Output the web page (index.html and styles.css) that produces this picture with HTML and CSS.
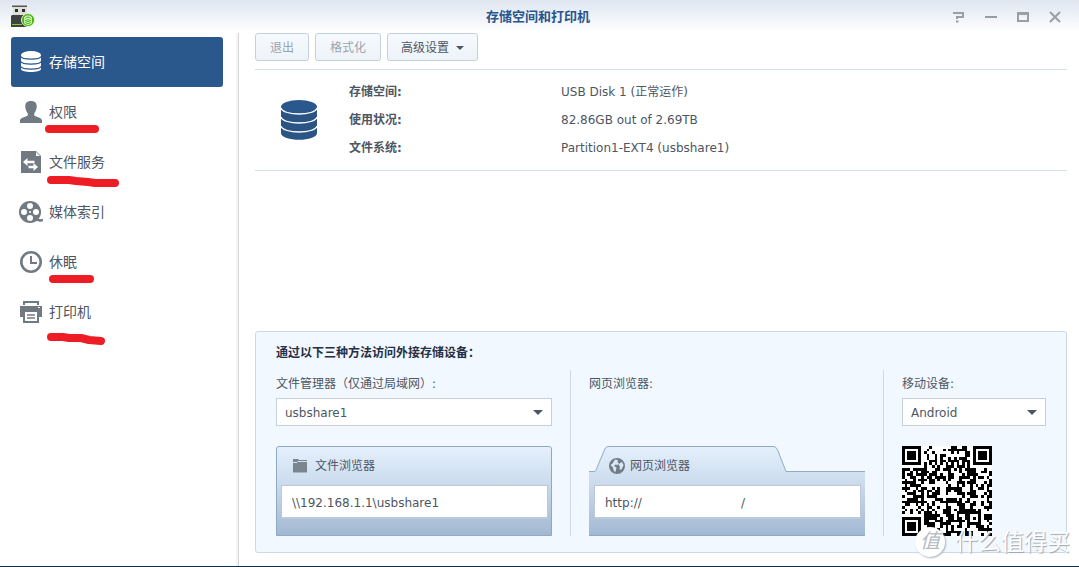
FILE: index.html
```html
<!DOCTYPE html>
<html lang="zh-CN">
<head>
<meta charset="utf-8">
<title>存储空间和打印机</title>
<link rel="stylesheet" href="styles.css">
</head>
<body>
<div class="window">
  <header class="titlebar">
    <svg class="app-icon" width="24" height="24" viewBox="0 0 24 24" aria-hidden="true">
      <rect x="2" y="1" width="14" height="10" rx="1" fill="#deded9"/>
      <path d="M1 0.5h15v1.5H1z" fill="#555"/>
      <path d="M4 4h3v3H4zM11 4h3v3h-3z" fill="#2b2b2b"/>
      <path d="M0 11l1-1h15v12H0z" fill="#3f4142"/>
      <path d="M1 19h10v1H1z" fill="#79cf25"/>
      <circle cx="17" cy="15" r="6.5" fill="#43b50b" stroke="#e3f1d8" stroke-width="1"/>
      <ellipse cx="17" cy="12.2" rx="3.3" ry="1.2" fill="none" stroke="#fff"/>
      <path d="M13.7 14.3q3.3 2 6.6 0M13.7 16.5q3.3 2 6.6 0M13.7 18.5q3.3 2 6.6 0M13.7 12v6.5M20.3 12v6.5" fill="none" stroke="#d8f5c4"/>
    </svg>
    <h1>存储空间和打印机</h1>
    <div class="window-controls">
      <button aria-label="帮助"><svg width="14" height="12" viewBox="0 0 14 12"><path d="M1 2h10v4H5v2M4 10.5h2.5" fill="none" stroke="#989fa7" stroke-width="2"/></svg></button>
      <button aria-label="最小化"><svg width="14" height="12" viewBox="0 0 14 12"><path d="M1 6h12" stroke="#969da6" stroke-width="2"/></svg></button>
      <button aria-label="最大化"><svg width="14" height="12" viewBox="0 0 14 12"><path d="M1 1h12v10H1zM3 4v5h8V4z" fill="#989fa7" fill-rule="evenodd"/></svg></button>
      <button aria-label="关闭"><svg width="14" height="12" viewBox="0 0 14 12"><path d="M2 1l10 10M12 1L2 11" stroke="#989fa7" stroke-width="2"/></svg></button>
    </div>
  </header>
  <div class="body">
    <nav class="sidebar">
      <a class="nav-item active" href="#">
        <svg width="24" height="24" viewBox="0 0 24 24"><path d="M2 5v14c0 4 20 4 20 0V5z" fill="#fff"/><ellipse cx="12" cy="5" rx="10" ry="4" fill="#fff"/><path d="M2 6.5c1 3.5 19 3.5 20 0M2 11.5c1 3.5 19 3.5 20 0M2 16.5c1 3.5 19 3.5 20 0" fill="none" stroke="#2a588c" stroke-width="1.2"/></svg>
        <span>存储空间</span>
      </a>
      <a class="nav-item" href="#">
        <svg width="24" height="24" viewBox="0 0 24 24"><path d="M12 1c4 0 6 2 5.700 6-.2 3-1.500 5-2.500 6.500v2c2 1.500 7.800 2 7.800 5V23H1v-2.500c0-3 5.800-3.500 7.800-5v-2C7.800 12 6.500 10 6.300 7 6 3 8 1 12 1z" fill="#717982"/></svg>
        <span>权限</span>
        <svg class="mark" width="80" height="24" viewBox="0 0 80 24"><path d="M4 8H50" /></svg>
      </a>
      <a class="nav-item" href="#">
        <svg width="24" height="24" viewBox="0 0 24 24"><path d="M2 1h15l5 5v17H2z" fill="#717982"/><path d="M17 2v4h4z" fill="#fff"/><path d="M4 12l4.500-4v2.700h7v2.600h-7V16zM19 17l-4.500-4v2.700h-5v2.600h5V21z" fill="#fff"/></svg>
        <span>文件服务</span>
        <svg class="mark" width="80" height="24" viewBox="0 0 80 24"><path d="M6 9h18l7 1 12 1 7 1h20"/></svg>
      </a>
      <a class="nav-item" href="#">
        <svg width="24" height="24" viewBox="0 0 24 24"><circle cx="11" cy="12" r="11" fill="#717982"/><path d="M16 18c3 3 5 3 8 2" fill="none" stroke="#717982" stroke-width="2.500"/><g fill="#fff"><circle cx="11" cy="6" r="3"/><circle cx="5" cy="12" r="3"/><circle cx="17" cy="12" r="3"/><circle cx="11" cy="18" r="3"/><circle cx="11" cy="12" r="1"/></g></svg>
        <span>媒体索引</span>
      </a>
      <a class="nav-item" href="#">
        <svg width="24" height="24" viewBox="0 0 24 24"><circle cx="12" cy="12" r="9.700" fill="none" stroke="#717982" stroke-width="2.600"/><path d="M12 6v7h6" fill="none" stroke="#717982" stroke-width="2"/></svg>
        <span>休眠</span>
        <svg class="mark" width="80" height="24" viewBox="0 0 80 24"><path d="M8 8H45"/></svg>
      </a>
      <a class="nav-item" href="#">
        <svg width="24" height="24" viewBox="0 0 24 24"><path d="M4 1h16v4H4zM1 6h22v11h-3v6H4v-6H1z" fill="#717982"/><path d="M6 3h12v2H6zM6 12h12v9H6zM19 7h2v1h-2z" fill="#fff"/><path d="M8 15h8M8 18h8" stroke="#717982" stroke-width="1.500"/></svg>
        <span>打印机</span>
        <svg class="mark low" width="80" height="24" viewBox="0 0 80 24"><path d="M6 9h12l6 1h12l8 2 12 1"/></svg>
      </a>
    </nav>
    <main class="content">
      <div class="toolbar">
        <button class="btn" disabled>退出</button>
        <button class="btn" disabled>格式化</button>
        <button class="btn menu">高级设置<i class="caret"></i></button>
      </div>
      <section class="device">
        <svg width="38" height="40" viewBox="0 0 38 40" aria-hidden="true"><path d="M1 7v26c0 9 36 9 36 0V7z" fill="#295484"/><ellipse cx="19" cy="7" rx="18" ry="7" fill="#2a588c"/><path d="M1 8c2 8 34 8 36 0M1 17c2 8 34 8 36 0M1 26c2 8 34 8 36 0" fill="none" stroke="#fff" stroke-width="1.300"/></svg>
        <dl>
          <dt>存储空间:</dt><dd>USB Disk 1 (正常运作)</dd>
          <dt>使用状况:</dt><dd>82.86GB out of 2.69TB</dd>
          <dt>文件系统:</dt><dd>Partition1-EXT4 (usbshare1)</dd>
        </dl>
      </section>
      <section class="access">
        <h2>通过以下三种方法访问外接存储设备：</h2>
        <div class="methods">
          <div class="method">
            <label for="share">文件管理器（仅通过局域网）:</label>
            <div class="picker"><select id="share"><option>usbshare1</option></select></div>
            <div class="card framed">
              <label class="card-title" for="path"><svg width="16" height="16" viewBox="0 0 16 16"><path d="M1 1h5l1 1h8v12.500H1z" fill="#7b858f"/><path d="M1 4.500h4l1-1h9" fill="none" stroke="#d6e4f2"/></svg>文件浏览器</label>
              <input id="path" type="text" value="\\192.168.1.1\usbshare1">
            </div>
          </div>
          <div class="method">
            <label for="url">网页浏览器:</label>
            <div class="card tabbed">
              <svg class="card-bg" width="100%" height="100%" aria-hidden="true">
                <defs><linearGradient id="sky" gradientUnits="userSpaceOnUse" x1="0" y1="0" x2="0" y2="90"><stop offset="0" stop-color="#e5f0fc"/><stop offset="0.350" stop-color="#cfdff0"/><stop offset="1" stop-color="#a2b8d2"/></linearGradient></defs>
                <rect x="0" y="25" width="100%" height="65" fill="url(#sky)"/>
                <path d="M5 26c2 0 2-2 3-4l7-17c1-3 2-4.500 5-4.500h164c3 0 4 2 5 4.500l8 20.500v1z" fill="url(#sky)"/>
                <path d="M0 25.500h5c2 0 2-2 3-4l7-16.500c1-3 2-4.500 5-4.500h164c3 0 4 2 5 4.500l8 20.500" fill="none" stroke="#93aac5"/>
                <rect x="197" y="25" width="100%" height="1" fill="#93aac5"/>
                <rect x="0" y="89" width="100%" height="1" fill="#8fa8c4"/>
              </svg>
              <label class="card-title" for="url"><svg width="16" height="16" viewBox="0 0 16 16"><circle cx="8" cy="8" r="7.200" fill="#727c87" stroke="#727c87" stroke-width="1.600"/><path d="M6 1.500l3 .5-.5 2L10 5.500 8.500 7l-2-.5L5 8l2.500 1.500L7 12l-1 2.500L4.500 12 4 9.500 1.500 7l2-1.500zM11 5l2-1 1.500 3-1 2.500L12 12l-1.500-1 .5-2.500L9.500 7z" fill="#dbe7f4"/></svg>网页浏览器</label>
              <input id="url" type="text" value="http://                          /">
            </div>
          </div>
          <div class="method">
            <label for="mobile">移动设备:</label>
            <div class="picker"><select id="mobile"><option>Android</option></select></div>
            <svg class="qr" id="qr" viewBox="0 0 33 33" role="img" aria-label="二维码"><path fill="#000"/></svg>
          </div>
        </div>
      </section>
    </main>
  </div>
  <div class="watermark"><span class="seal">值</span><span>什么值得买</span></div>
</div>
<script src="qr.js"></script>
</body>
</html>
```
FILE: styles.css
```css
* { box-sizing: border-box; }
body {
  margin: 0;
  font: 12px/28px "DejaVu Sans", "Noto Sans CJK SC", sans-serif;
  color: #4d5663;
}
button, input, select { font: inherit; color: inherit; }
h1, h2, dl, dd { margin: 0; }
.window {
  position: relative;
  min-height: 100vh;
  display: flex;
  flex-direction: column;
  background: #fff;
  border-bottom: 1px solid #0d2f4c;
}
.titlebar {
  display: grid;
  grid-template-columns: 1fr auto 1fr;
  align-items: center;
  height: 33px;
  padding: 0 17px 0 11px;
  background: linear-gradient(#dfe6f0, #fff);
}
.titlebar h1 { padding-left: 3px; font-size: 13px; color: #2a558d; }
.app-icon { display: block; }
.window-controls { display: flex; justify-content: flex-end; gap: 18px; }
.window-controls button { padding: 0; border: 0; background: none; line-height: 0; }
.body { flex: 1; display: flex; }
.sidebar {
  flex: none;
  width: 239px;
  padding: 4px 15px 0 11px;
  border-right: 1px solid #d5d7da;
  box-shadow: inset -2px 0 0 #f5f5f6;
}
.nav-item {
  position: relative;
  display: flex;
  align-items: center;
  gap: 6px;
  height: 50px;
  padding: 0 8px;
  border-radius: 3px;
  font-size: 14px;
  color: #4d5663;
  text-decoration: none;
}
.nav-item.active { background: #2a588c; color: #fff; }
.mark {
  position: absolute;
  left: 34px;
  top: 34px;
  fill: none;
  stroke: #ee1c24;
  stroke-width: 8;
  stroke-linecap: round;
  stroke-linejoin: round;
}
.mark.low { top: 41px; }
.content {
  flex: 1;
  min-width: 0;
  display: flex;
  flex-direction: column;
  padding: 0 12px 13px 16px;
}
.toolbar { display: flex; gap: 6px; padding-bottom: 8px; border-bottom: 1px solid #d6e0eb; }
.btn {
  display: flex;
  align-items: center;
  justify-content: center;
  gap: 7px;
  min-width: 54px;
  height: 28px;
  padding: 2px 14px 0;
  border: 1px solid #c5d0dd;
  border-radius: 3px;
  background: linear-gradient(#f6fafe, #eef3f9);
}
.btn:disabled { color: #9aa4b0; }
.btn.menu { padding: 2px 13px 0; }
.caret { border: 4px solid transparent; border-top-color: #4d5663; border-bottom: 0; }
.device {
  display: flex;
  align-items: center;
  gap: 31px;
  padding: 8px 0 8px 25px;
  border-bottom: 1px solid #d6e0eb;
}
.device dl { flex: 1; display: grid; grid-template-columns: 212px 1fr; }
.device dt { font-weight: bold; }
.access {
  margin-top: auto;
  padding: 7px 20px 16px;
  border: 1px solid #ccd9e6;
  border-radius: 3px;
  background: #f1f8ff;
}
.access h2 { font-size: 12px; color: #262f45; }
.methods { display: grid; grid-template-columns: 295fr 313fr 162fr; margin-top: 3px; }
.method {
  display: flex;
  flex-direction: column;
  min-width: 0;
  padding: 0 18px;
  border-right: 1px solid #ccd9e6;
}
.method:first-child { padding-left: 0; }
.method:last-child { padding-right: 0; border-right: 0; }
.picker { position: relative; }
.picker::after {
  content: "";
  position: absolute;
  right: 9px;
  top: 12px;
  border: 5px solid transparent;
  border-top-color: #4d5663;
  border-bottom: 0;
}
.picker select {
  display: block;
  width: 100%;
  height: 28px;
  padding: 0 8px;
  border: 1px solid #c5d0dd;
  border-radius: 0;
  background: #fff;
  appearance: none;
}
.card { display: flex; flex-direction: column; height: 90px; margin-top: 20px; padding: 6px 4px 0 5px; }
.framed {
  border: 1px solid #8fa8c4;
  border-radius: 3px 3px 0 0;
  padding: 5px 3px 0 4px;
  background: linear-gradient(#e5f0fc, #cfdff0 35%, #a2b8d2);
}
.tabbed { position: relative; margin-top: 48px; }
.card-bg { position: absolute; inset: 0; }
.card-title { position: relative; display: flex; align-items: center; gap: 7px; height: 28px; padding-left: 11px; }
.tabbed .card-title { padding-left: 15px; gap: 5px; }
.card-title svg { flex: none; }
.card input {
  position: relative;
  width: 100%;
  height: 34px;
  margin-top: 5px;
  padding: 2px 10px 0;
  border: 1px solid #bcc8d6;
  border-bottom: 2px solid #bdc9d7;
  background: #fff;
}
.qr {
  width: 90px;
  height: 90px;
  margin-top: 20px;
  background: #fff;
  shape-rendering: crispEdges;
}
.watermark {
  position: absolute;
  right: 9px;
  bottom: 8px;
  display: flex;
  align-items: center;
  gap: 10px;
  font-size: 23px;
  line-height: 32px;
  color: #fff;
  text-shadow: 1px 1px 1px #9aa4b0;
  pointer-events: none;
}
.seal {
  width: 30px;
  height: 30px;
  border-radius: 50%;
  background: #fff;
  box-shadow: 1px 1px 2px #aab2bc;
  font-size: 20px;
  font-style: italic;
  line-height: 28px;
  text-align: center;
  text-shadow: none;
  color: #b4bac1;
}
```
FILE: qr.js
```js
// Version 4, level L QR code: one block of 80 data and 20 error-correction codewords.
(function () {
  const N = 33, DATA = 80, ECC = 20;
  const text = 'http://play.google.com/store/apps/details?id=com.synology.DSfile';

  let bits = '0100' + text.length.toString(2).padStart(8, '0');
  for (const c of text) bits += c.charCodeAt(0).toString(2).padStart(8, '0');
  bits += '0000';
  const words = [];
  for (let i = 0; i < bits.length; i += 8) words.push(parseInt(bits.slice(i, i + 8).padEnd(8, '0'), 2));
  for (let pad = 0xec; words.length < DATA; pad ^= 0xfd) words.push(pad);

  function mul(a, b) {
    let z = 0;
    for (let i = 7; i >= 0; i--) {
      z = (z << 1) ^ ((z >> 7) * 0x11d);
      z ^= ((b >> i) & 1) * a;
    }
    return z;
  }
  const gen = new Array(ECC).fill(0);
  gen[ECC - 1] = 1;
  let root = 1;
  for (let i = 0; i < ECC; i++) {
    for (let j = 0; j < ECC; j++) {
      gen[j] = mul(gen[j], root);
      if (j + 1 < ECC) gen[j] ^= gen[j + 1];
    }
    root = mul(root, 2);
  }
  const rem = new Array(ECC).fill(0);
  for (const w of words) {
    const f = w ^ rem.shift();
    rem.push(0);
    gen.forEach((g, i) => { rem[i] ^= mul(g, f); });
  }
  const all = words.concat(rem);

  const m = Array.from({ length: N }, () => new Array(N).fill(false));
  const fixed = Array.from({ length: N }, () => new Array(N).fill(false));
  const set = (x, y, v) => {
    if (x >= 0 && y >= 0 && x < N && y < N) { m[y][x] = !!v; fixed[y][x] = true; }
  };
  for (let i = 0; i < N; i++) { set(6, i, i % 2 === 0); set(i, 6, i % 2 === 0); }
  for (const [cx, cy] of [[3, 3], [N - 4, 3], [3, N - 4]])
    for (let dy = -4; dy <= 4; dy++)
      for (let dx = -4; dx <= 4; dx++) {
        const d = Math.max(Math.abs(dx), Math.abs(dy));
        set(cx + dx, cy + dy, d !== 2 && d !== 4);
      }
  for (let dy = -2; dy <= 2; dy++)
    for (let dx = -2; dx <= 2; dx++)
      set(26 + dx, 26 + dy, Math.max(Math.abs(dx), Math.abs(dy)) !== 1);

  // Format bits for level L with mask 0.
  const b = i => (0b111011111000100 >> i) & 1;
  for (let i = 0; i < 6; i++) set(8, i, b(i));
  set(8, 7, b(6)); set(8, 8, b(7)); set(7, 8, b(8));
  for (let i = 9; i < 15; i++) set(14 - i, 8, b(i));
  for (let i = 0; i < 8; i++) set(N - 1 - i, 8, b(i));
  for (let i = 8; i < 15; i++) set(8, N - 15 + i, b(i));
  set(8, N - 8, true);

  let k = 0;
  for (let right = N - 1; right >= 1; right -= 2) {
    if (right === 6) right = 5;
    for (let v = 0; v < N; v++)
      for (let j = 0; j < 2; j++) {
        const x = right - j;
        const y = ((right + 1) & 2) === 0 ? N - 1 - v : v;
        if (fixed[y][x]) continue;
        const bit = k < all.length * 8 ? (all[k >> 3] >> (7 - (k & 7))) & 1 : 0;
        k++;
        m[y][x] = !!(bit ^ ((x + y) % 2 === 0 ? 1 : 0));
      }
  }

  let d = '';
  m.forEach((row, y) => row.forEach((v, x) => { if (v) d += `M${x} ${y}h1v1h-1z`; }));
  document.querySelector('#qr path').setAttribute('d', d);
})();
```
